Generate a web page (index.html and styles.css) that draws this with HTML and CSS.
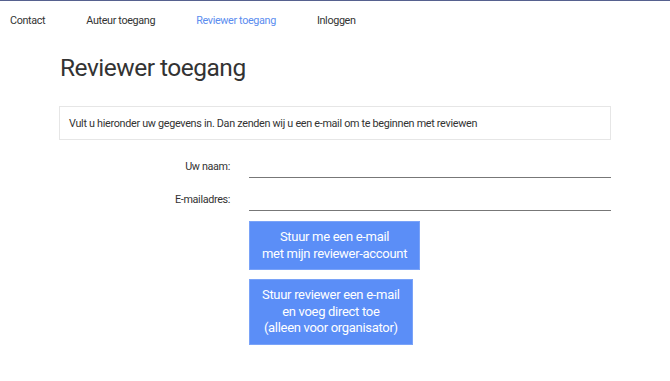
FILE: index.html
```html
<!DOCTYPE html>
<html lang="nl">
<head>
  <meta charset="UTF-8" />
  <meta name="viewport" content="width=device-width, initial-scale=1.0"/>
  <title>Reviewer toegang</title>
  <link rel="stylesheet" href="styles.css">
</head>
<body>
  <nav class="topnav">
    <a href="#">Contact</a>
    <a href="#">Auteur toegang</a>
    <a href="#" class="active">Reviewer toegang</a>
    <a href="#">Inloggen</a>
  </nav>

  <div class="container">
    <h1>Reviewer toegang</h1>

    <div class="info">Vult u hieronder uw gegevens in. Dan zenden wij u een e-mail om te beginnen met reviewen</div>

    <form class="form">
      <div class="row">
        <label for="name">Uw naam:</label>
        <input type="text" id="name">
      </div>
      <div class="row">
        <label for="email">E-mailadres:</label>
        <input type="email" id="email">
      </div>
      <div class="row">
        <span></span>
        <div class="buttons">
          <button type="button">Stuur me een e-mail<br>met mijn reviewer-account</button>
          <button type="button">Stuur reviewer een e-mail<br>en voeg direct toe<br>(alleen voor organisator)</button>
        </div>
      </div>
    </form>
  </div>
</body>
</html>
```

FILE: styles.css
```css
* {
  box-sizing: border-box;
}

body {
  margin: 0;
  font-family: Roboto, "Liberation Sans", sans-serif;
  color: #333;
  background: #fff;
  border-top: 1px solid #56618f;
}

.topnav {
  display: flex;
  gap: 41px;
  padding: 12px 10px 0;
  height: 39px;
}

.topnav a {
  font-size: 10.8px;
  letter-spacing: -0.35px;
  color: #333;
  text-decoration: none;
  line-height: 16px;
}

.topnav a.active {
  color: #5b8def;
}

.container {
  max-width: 552px;
  margin: 0 auto;
}

h1 {
  margin: 13px 0 0;
  font-size: 24.5px;
  letter-spacing: -0.5px;
  font-weight: 400;
  line-height: 29px;
  color: #333;
  padding-left: 1px;
}

.info {
  margin-top: 24px;
  border: 1px solid #e6e6e6;
  padding: 10px 9px;
  font-size: 10.8px;
  letter-spacing: -0.3px;
  line-height: 13px;
  height: 34px;
}

.form {
  margin-top: 16px;
}

.row {
  display: grid;
  grid-template-columns: 171px 1fr;
  column-gap: 19px;
  align-items: start;
}

.row + .row {
  margin-top: 11px;
}

.row label {
  text-align: right;
  font-size: 10.8px;
  letter-spacing: -0.35px;
  line-height: 16px;
  padding-top: 3px;
}

.row input {
  border: none;
  border-bottom: 1px solid #777;
  height: 22px;
  font: inherit;
  padding: 0;
  outline: none;
}

.row + .row + .row {
  margin-top: 10px;
}

.buttons {
  display: flex;
  flex-direction: column;
  align-items: flex-start;
  gap: 9px;
}

.buttons button {
  font-family: Roboto, "Liberation Sans", sans-serif;
  font-size: 13px;
  letter-spacing: -0.3px;
  line-height: 16.5px;
  color: #fff;
  background: #5b8ef7;
  border: 1px solid #7aa3f8;
  padding: 7px 12px;
  cursor: pointer;
}
```
